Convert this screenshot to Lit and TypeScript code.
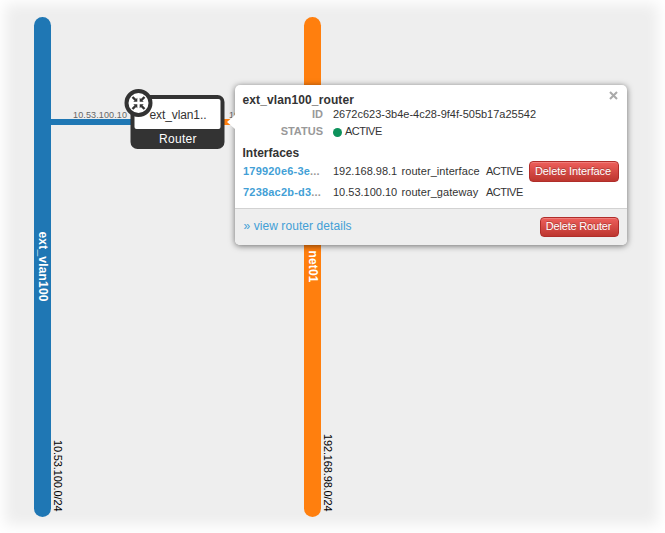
import { LitElement, html, css, svg } from "lit";
import { customElement } from "lit/decorators.js";

interface Network {
  x: number;
  color: string;
  name: string;
  nameStart: number;
  nameLength: number;
  cidr: string;
  cidrStart: number;
  cidrLength: number;
}

const networks: Network[] = [
  { x: 34, color: "#1f77b4", name: "ext_vlan100", nameStart: 231.5, nameLength: 70, cidr: "10.53.100.0/24", cidrStart: 440, cidrLength: 71.5 },
  { x: 304, color: "#ff7f0e", name: "net01", nameStart: 250.5, nameLength: 32, cidr: "192.168.98.0/24", cidrStart: 434, cidrLength: 77.5 },
];

@customElement("topology-canvas")
export class TopologyCanvas extends LitElement {
  static styles = css`
    :host { display: block; width: 665px; height: 533px; }
    svg { display: block; font-family: "Liberation Sans", Arial, sans-serif; }
    .name { font-size: 12px; font-weight: bold; fill: #fff; }
    .cidr { font-size: 11px; fill: #000; }
    .port { font-size: 9px; fill: #666; }
    .router { font-size: 12px; fill: #333; }
    .kind { font-size: 12px; fill: #fff; }
  `;
  render() {
    return html`<svg width="665" height="533" viewBox="0 0 665 533">
      ${networks.map((n) => svg`
        <rect x=${n.x} y="17" width="17" height="500" rx="8.5" fill=${n.color}></rect>
        <text class="name" transform="translate(${n.x + 4.5} ${n.nameStart}) rotate(90)" textLength=${n.nameLength}>${n.name}</text>
        <text class="cidr" transform="translate(${n.x + 20} ${n.cidrStart}) rotate(90)" textLength=${n.cidrLength}>${n.cidr}</text>`)}
      <rect x="51" y="119" width="81" height="6" fill="#1f77b4"></rect>
      <rect x="223" y="119" width="81" height="6" fill="#ff7f0e"></rect>
      <text class="port" x="73" y="118" textLength="54">10.53.100.10</text>
      <text class="port" x="229" y="118" textLength="54">192.168.98.1</text>
      <rect x="130.5" y="95" width="94" height="54" rx="7" fill="#333"></rect>
      <rect x="134.5" y="99" width="86" height="30" rx="2" fill="#fff"></rect>
      <text class="router" x="149.5" y="119" textLength="57">ext_vlan1..</text>
      <text class="kind" x="159" y="143" textLength="37.5">Router</text>
      <circle cx="138.5" cy="103" r="12" fill="#fff" stroke="#333" stroke-width="4"></circle>
      <g transform="translate(138.5 103)" fill="#333" stroke="#333">
        ${[0, 90, 180, 270].map((a) => svg`<g transform="rotate(${a})">
          <path d="M-6 -6 L-3 -3" stroke-width="2.4" fill="none"></path>
          <path d="M-1.2 -1.2 H-5.2 L-1.2 -5.2 Z" stroke="none"></path>
        </g>`)}
      </g>
    </svg>`;
  }
}

@customElement("router-balloon")
export class RouterBalloon extends LitElement {
  static styles = css`
    :host {
      display: flex; flex-direction: column; box-sizing: border-box;
      width: 392px; height: 160px; border-radius: 5px; background: #fff;
      font: 11px/16px "Liberation Sans", Arial, sans-serif; color: #333;
      box-shadow: 0 1px 6px rgba(0, 0, 0, 0.55);
    }
    .tip {
      position: absolute; left: -8px; top: 30px; width: 0; height: 0;
      border: 7px solid transparent; border-left: 0; border-right: 8px solid #fff;
    }
    .close { position: absolute; right: 9px; top: 6px; width: 9px; height: 9px; }
    .body { height: 116px; padding: 7px 8px 0 7.5px; border-bottom: 1px solid #d2d2d2; }
    .title { font-size: 12px; font-weight: bold; line-height: 16px; }
    .name { letter-spacing: 0.12px; }
    .row { display: grid; grid-template-columns: 80.5px 1fr; column-gap: 10px; }
    .key { text-align: right; font-weight: bold; color: #999; }
    .id-row { line-height: 14px; height: 14px; margin-top: -1px; }
    .status-row { line-height: 16px; height: 16px; margin-top: 2px; }
    .status { display: flex; align-items: center; gap: 3px; letter-spacing: -0.5px; }
    .dot { width: 9px; height: 9px; border-radius: 50%; background: #0d925b; margin-top: 2px; }
    .heading { margin-top: 6px; }
    .port {
      display: grid; grid-template-columns: 90.5px 68.5px 84.5px 43px 90px;
      align-items: center; height: 21px; white-space: nowrap;
    }
    .port span { position: relative; top: -1px; }
    .port .link { position: static; }
    .uuid { font-weight: bold; color: #999; padding-left: 0.5px; letter-spacing: 0.2px; }
    .link { color: #439fd6; }
    .kind { letter-spacing: 0.07px; }
    .state { letter-spacing: -0.5px; }
    .foot {
      flex: 1; display: flex; align-items: center; justify-content: space-between;
      padding: 0 8px 0 8.5px; background: #eee; border-radius: 0 0 5px 5px;
    }
    .details { font-size: 12px; color: #439fd6; letter-spacing: 0.07px; padding-bottom: 2px; }
    .btn {
      box-sizing: border-box; height: 20px; padding: 0 2px 2px 0; text-align: center;
      font: 11px/16px "Liberation Sans", Arial, sans-serif;
      color: #fff; border: 1px solid #b02d2a; border-radius: 4px; white-space: nowrap;
      background: linear-gradient(#ee5f5b, #bd362f); text-shadow: 0 -1px 0 rgba(0, 0, 0, 0.25);
      box-shadow: inset 0 1px 0 rgba(255, 255, 255, 0.2);
    }
    .del-port { width: 90px; height: 21px; letter-spacing: -0.1px; }
    .del-router { width: 79px; letter-spacing: -0.18px; }
  `;
  render() {
    return html`
      <div class="tip"></div>
      <svg class="close" viewBox="0 0 9 9"><path d="M1 1L8 8M8 1L1 8" stroke="#aaa" stroke-width="2.1"></path></svg>
      <div class="body">
        <div class="title name">ext_vlan100_router</div>
        <div class="row id-row"><span class="key">ID</span><span>2672c623-3b4e-4c28-9f4f-505b17a25542</span></div>
        <div class="row status-row"><span class="key">STATUS</span><span class="status"><i class="dot"></i>ACTIVE</span></div>
        <div class="title heading">Interfaces</div>
        <div class="port">
          <span class="uuid"><span class="link">179920e6-3e</span>...</span>
          <span>192.168.98.1</span><span class="kind">router_interface</span><span class="state">ACTIVE</span>
          <button class="btn del-port">Delete Interface</button>
        </div>
        <div class="port">
          <span class="uuid"><span class="link">7238ac2b-d3</span>...</span>
          <span>10.53.100.10</span><span class="kind">router_gateway</span><span class="state">ACTIVE</span>
        </div>
      </div>
      <div class="foot">
        <span class="details">» view router details</span>
        <button class="btn del-router">Delete Router</button>
      </div>`;
  }
}

@customElement("app-root")
export class AppRoot extends LitElement {
  static styles = css`
    :host {
      display: block; position: relative; width: 665px; height: 533px; overflow: hidden;
      background: #eee; box-shadow: inset -1px -2px 14px 6px #fff;
    }
    router-balloon { position: absolute; left: 235px; top: 85px; }
  `;
  render() {
    return html`<topology-canvas></topology-canvas><router-balloon></router-balloon>`;
  }
}
